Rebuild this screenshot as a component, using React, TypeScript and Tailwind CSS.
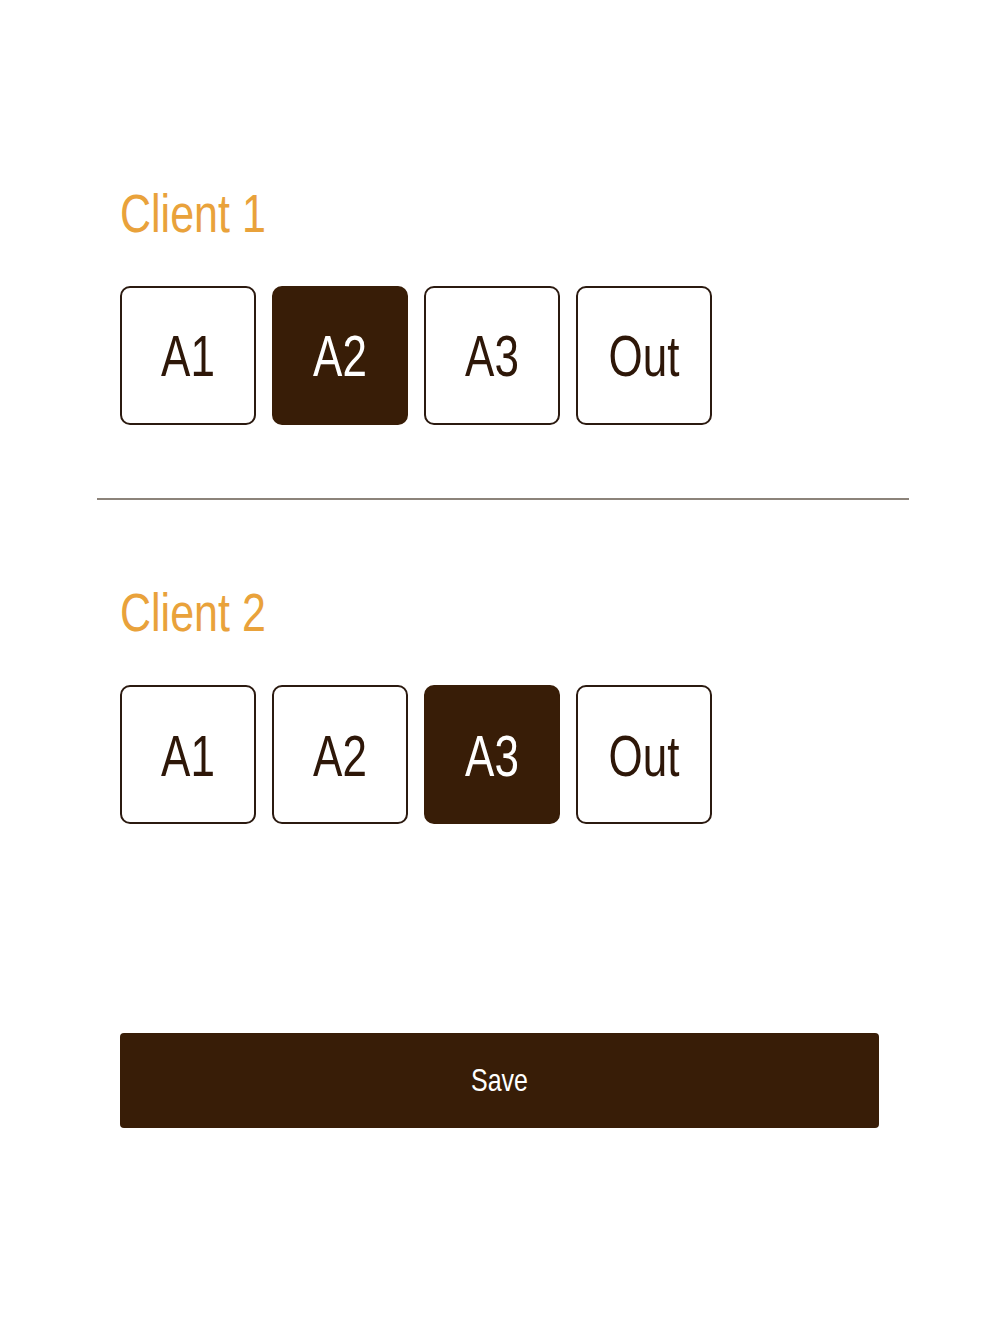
import { useState } from "react";

const options = ["A1", "A2", "A3", "Out"];

function ClientPicker({
  label,
  value,
  onChange,
}: {
  label: string;
  value: string;
  onChange: (v: string) => void;
}) {
  return (
    <div className="px-[120px]">
      <h2 className="h-[43px] origin-center scale-y-[1.24] text-[43px] leading-none text-[#e9a23b]">
        {label}
      </h2>
      <div className="mt-[50px] flex gap-[16px]">
        {options.map((o) => {
          const active = o === value;
          return (
            <button
              key={o}
              onClick={() => onChange(o)}
              className={
                active
                  ? "flex h-[139px] w-[136px] items-center justify-center rounded-[10px] border-2 border-[#381d07] bg-[#381d07] text-white"
                  : "flex h-[139px] w-[136px] items-center justify-center rounded-[10px] border-2 border-[#2b1a10] bg-white text-[#2e1708]"
              }
            >
              <span className="mt-[3px] block scale-y-[1.3] text-[44px] leading-none">{o}</span>
            </button>
          );
        })}
      </div>
    </div>
  );
}

export default function App() {
  const [c1, setC1] = useState("A2");
  const [c2, setC2] = useState("A3");

  return (
    <div className="min-h-screen bg-white pt-[193px] font-['Liberation_Sans',Arial,sans-serif]">
      <ClientPicker label="Client 1" value={c1} onChange={setC1} />
      <div className="mt-[73px] ml-[97px] h-[2px] w-[812px] bg-[#8c837a]" />
      <div className="mt-[92px]">
        <ClientPicker label="Client 2" value={c2} onChange={setC2} />
      </div>
      <div className="mt-[209px] px-[120px]">
        <button className="flex h-[95px] w-[759px] items-center justify-center rounded-[4px] bg-[#381d07] text-white">
          <span className="block scale-y-[1.22] text-[25px] leading-none">Save</span>
        </button>
      </div>
    </div>
  );
}
